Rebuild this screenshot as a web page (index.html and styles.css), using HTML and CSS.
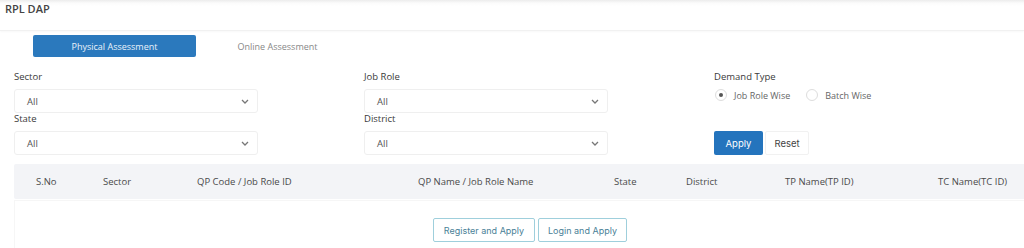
FILE: index.html
```html
<!DOCTYPE html>
<html>
<head>
<meta charset="utf-8">
<link rel="stylesheet" href="styles.css">
</head>
<body>
<header class="topbar"><h1 class="title">RPL DAP</h1></header>
<nav class="tabs">
  <button class="tab tab-active">Physical Assessment</button>
  <button class="tab">Online Assessment</button>
</nav>
<section class="filters">
  <div class="col">
    <label class="lbl">Sector</label>
    <div class="select"><span>All</span><svg class="chev" viewBox="0 0 8 5" width="8" height="5"><path d="M1 1l3 3 3-3" fill="none" stroke="#777" stroke-width="1.3"/></svg></div>
    <label class="lbl">State</label>
    <div class="select"><span>All</span><svg class="chev" viewBox="0 0 8 5" width="8" height="5"><path d="M1 1l3 3 3-3" fill="none" stroke="#777" stroke-width="1.3"/></svg></div>
  </div>
  <div class="col">
    <label class="lbl">Job Role</label>
    <div class="select"><span>All</span><svg class="chev" viewBox="0 0 8 5" width="8" height="5"><path d="M1 1l3 3 3-3" fill="none" stroke="#777" stroke-width="1.3"/></svg></div>
    <label class="lbl">District</label>
    <div class="select"><span>All</span><svg class="chev" viewBox="0 0 8 5" width="8" height="5"><path d="M1 1l3 3 3-3" fill="none" stroke="#777" stroke-width="1.3"/></svg></div>
  </div>
  <div class="col">
    <label class="lbl">Demand Type</label>
    <div class="radios">
      <span class="radio radio-on"></span><span class="rtext">Job Role Wise</span>
      <span class="radio"></span><span class="rtext">Batch Wise</span>
    </div>
    <div class="actions">
      <button class="btn-apply">Apply</button>
      <button class="btn-reset">Reset</button>
    </div>
  </div>
</section>
<section class="table">
  <div class="thead">
    <span>S.No</span><span>Sector</span><span>QP Code / Job Role ID</span><span>QP Name / Job Role Name</span><span>State</span><span>District</span><span>TP Name(TP ID)</span><span>TC Name(TC ID)</span>
  </div>
  <div class="trow">
    <button class="btn-out">Register and Apply</button>
    <button class="btn-out">Login and Apply</button>
  </div>
</section>
</body>
</html>
```
FILE: styles.css
```css
* { box-sizing: border-box; }
body {
  margin: 0;
  background: #fff;
  font-family: "Open Sans", "Noto Sans", sans-serif;
  color: #333;
  overflow: hidden;
  width: 1024px;
  height: 248px;
}
.topbar {
  height: 31px;
  background: linear-gradient(#ececec 0, #fbfbfb 3px, #fff 6px);
  border-bottom: 1px solid #f1f1f1;
  box-shadow: 0 1px 2px rgba(0,0,0,0.03);
  padding: 2px 0 0 5px;
}
.title {
  margin: 0;
  font-size: 11px;
  font-weight: 600;
  color: #444;
  line-height: 14px;
}
.tabs {
  display: flex;
  padding: 4px 0 0 33px;
}
.tab {
  width: 163px;
  height: 22px;
  border: none;
  background: transparent;
  font-family: "Open Sans", sans-serif;
  font-size: 9px;
  color: #888;
  border-radius: 2px;
  padding: 0;
}
.tab-active {
  background: #2b79bd;
  color: #eaf2fa;
}
.filters {
  display: grid;
  grid-template-columns: 244px 244px 200px;
  column-gap: 106px;
  padding: 14px 0 0 14px;
  height: 107px;
}
.col { display: flex; flex-direction: column; align-items: flex-start; }
.lbl {
  font-size: 9.5px;
  line-height: 12px;
  color: #3a3a3a;
  margin-bottom: 6px;
}
.select {
  width: 244px;
  height: 24px;
  border: 1px solid #efefef;
  border-radius: 3px;
  display: flex;
  align-items: center;
  justify-content: space-between;
  padding: 0 8px 0 12px;
  font-size: 9.5px;
  color: #555;
}
.select span { padding-top: 1px; }
.chev { display: block; }
.radios {
  display: flex;
  align-items: center;
  height: 12px;
  padding-left: 1px;
}
.radio {
  width: 12px;
  height: 12px;
  border-radius: 50%;
  border: 1px solid #ddd;
  display: inline-flex;
  align-items: center;
  justify-content: center;
}
.radio-on::after {
  content: "";
  width: 4px;
  height: 4px;
  border-radius: 50%;
  background: #555;
}
.rtext {
  font-size: 9px;
  color: #666;
  margin-left: 7px;
  margin-right: 16px;
}
.actions {
  display: flex;
  margin-top: 30px;
}
.btn-apply {
  width: 49px;
  height: 24px;
  background: #2474bd;
  color: #fff;
  border: none;
  border-radius: 2px;
  font-family: "Inter", "Lato", sans-serif;
  font-size: 9.5px;
  padding: 0;
}
.btn-reset {
  width: 44px;
  height: 24px;
  margin-left: 2px;
  background: #fff;
  color: #444;
  border: 1px solid #f1f1f1;
  border-radius: 2px;
  font-family: "Inter", "Lato", sans-serif;
  font-size: 9.5px;
  padding: 0;
}
.table { margin-left: 14px; }
.thead {
  height: 35px;
  background: #f3f4f7;
  display: grid;
  grid-template-columns: 67px 94px 221px 196px 72px 99px 153px 1fr;
  align-items: center;
  padding-left: 22px;
  font-size: 9.5px;
  color: #4a4a4a;
  border-radius: 2px 0 0 2px;
}
.trow {
  height: 50px;
  margin-top: 1px;
  border: 1px solid #f6f6f6;
  border-right: none;
  display: flex;
  align-items: flex-start;
  padding: 17px 0 0 418px;
  gap: 3px;
}
.btn-out {
  height: 24px;
  background: #fff;
  border: 1px solid #9fcfdc;
  border-radius: 2px;
  color: #4a7f97;
  font-family: "Inter", "Lato", sans-serif;
  font-size: 9px;
  padding: 0;
}
.btn-out:first-child { width: 102px; }
.btn-out:last-child { width: 89px; }
```
